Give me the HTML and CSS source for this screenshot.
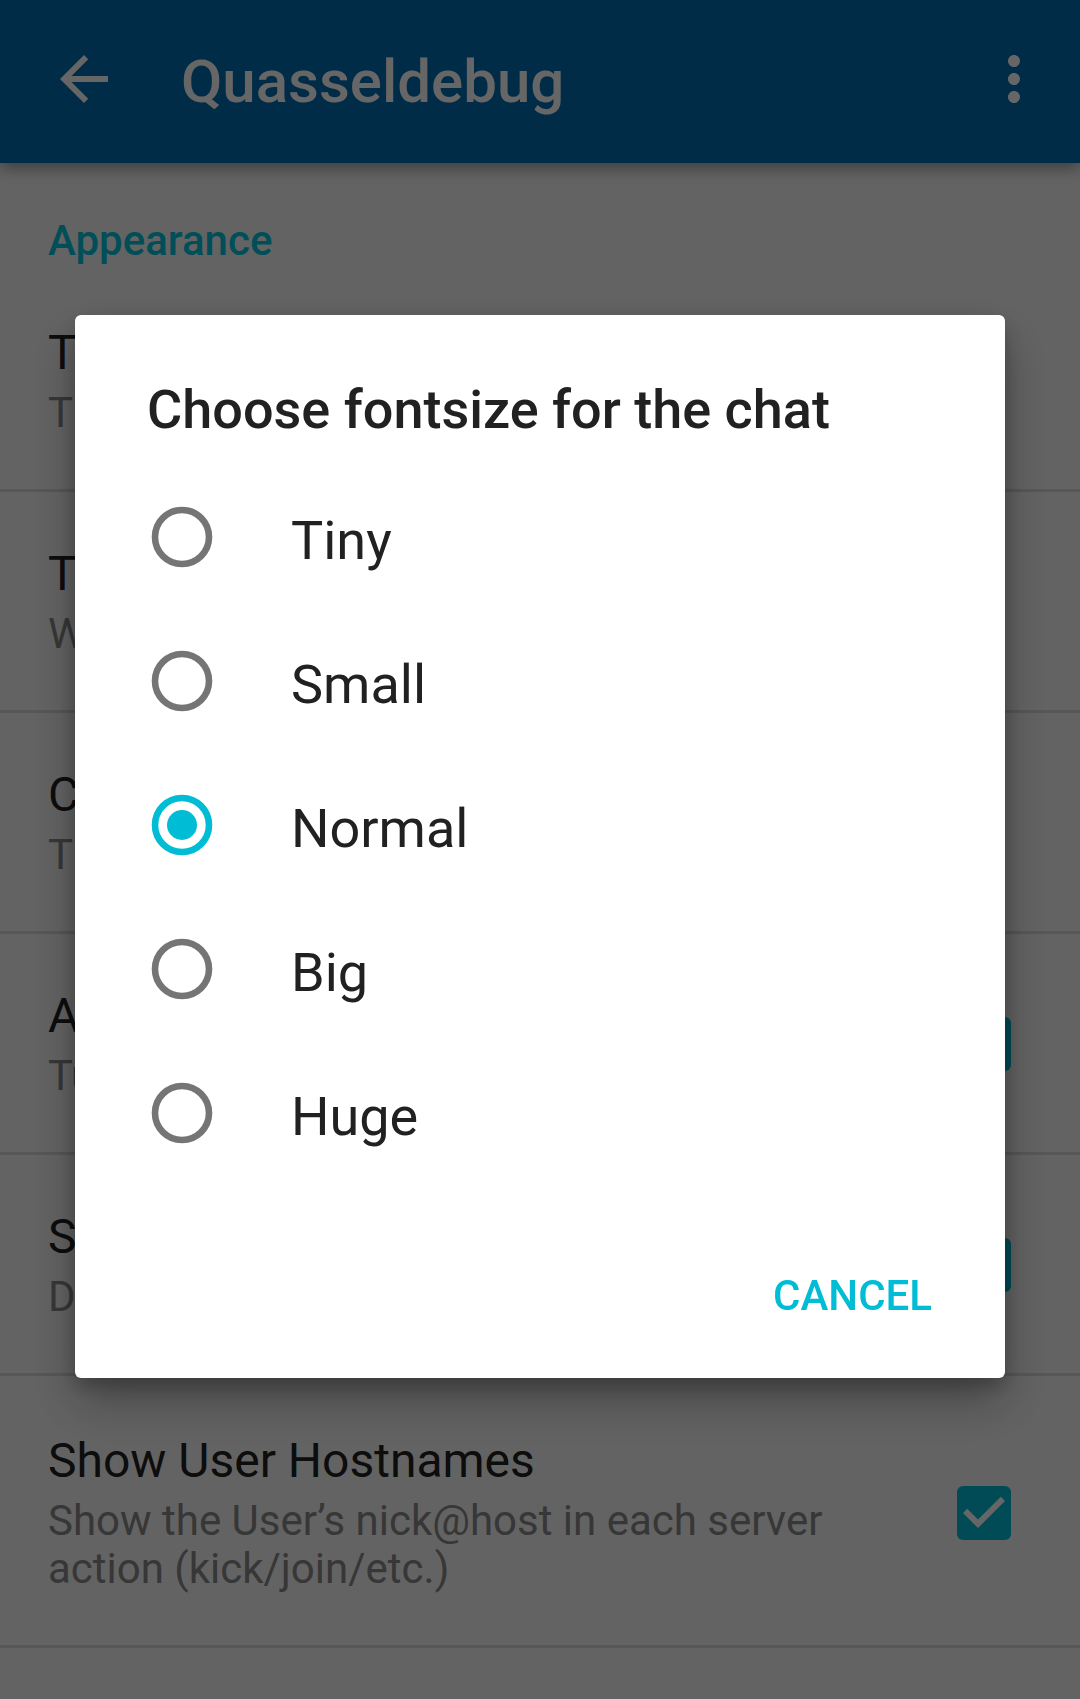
FILE: index.html
```html
<!DOCTYPE html>
<html lang="en">
<head>
<meta charset="utf-8">
<title>Quasseldebug – Settings</title>
<link rel="stylesheet" href="styles.css">
</head>
<body>
<div class="app">
  <header class="toolbar">
    <svg class="tb-icon back" viewBox="0 0 24 24" aria-label="Back"><path d="M20 11H7.83l5.59-5.59L12 4l-8 8 8 8 1.41-1.41L7.83 13H20v-2z"/></svg>
    <h1 class="tb-title">Quasseldebug</h1>
    <svg class="tb-icon more" viewBox="0 0 24 24" aria-label="More options"><path d="M12 8c1.1 0 2-.9 2-2s-.9-2-2-2-2 .9-2 2 .9 2 2 2zm0 2c-1.1 0-2 .9-2 2s.9 2 2 2 2-.9 2-2-.9-2-2-2zm0 6c-1.1 0-2 .9-2 2s.9 2 2 2 2-.9 2-2-.9-2-2-2z"/></svg>
  </header>

  <main class="prefs">
    <div class="category">Appearance</div>

    <div class="pref">
      <div class="pref-text">
        <div class="pref-title">Theme</div>
        <div class="pref-summary">The look of the app</div>
      </div>
    </div>

    <div class="pref">
      <div class="pref-text">
        <div class="pref-title">Timestamp format</div>
        <div class="pref-summary">Which format to use</div>
      </div>
    </div>

    <div class="pref">
      <div class="pref-text">
        <div class="pref-title">Chat fontsize</div>
        <div class="pref-summary">The size of the chat text</div>
      </div>
    </div>

    <div class="pref">
      <div class="pref-text">
        <div class="pref-title">Autocomplete</div>
        <div class="pref-summary">Turn on nick completion</div>
      </div>
      <svg class="checkbox" viewBox="0 0 24 24"><rect x="3" y="3" width="18" height="18" rx="2" class="cb-box"/><path class="cb-check" d="M10 17l-5-5 1.41-1.41L10 14.17l7.59-7.59L19 8l-9 9z"/></svg>
    </div>

    <div class="pref">
      <div class="pref-text">
        <div class="pref-title">Show timestamps</div>
        <div class="pref-summary">Display message times</div>
      </div>
      <svg class="checkbox" viewBox="0 0 24 24"><rect x="3" y="3" width="18" height="18" rx="2" class="cb-box"/><path class="cb-check" d="M10 17l-5-5 1.41-1.41L10 14.17l7.59-7.59L19 8l-9 9z"/></svg>
    </div>

    <div class="pref pref-multiline">
      <div class="pref-text">
        <div class="pref-title">Show User Hostnames</div>
        <div class="pref-summary">Show the User’s nick@host in each server action (kick/join/etc.)</div>
      </div>
      <svg class="checkbox" viewBox="0 0 24 24"><rect x="3" y="3" width="18" height="18" rx="2" class="cb-box"/><path class="cb-check" d="M10 17l-5-5 1.41-1.41L10 14.17l7.59-7.59L19 8l-9 9z"/></svg>
    </div>
  </main>
</div>

<div class="scrim"></div>

<div class="dialog" role="dialog">
  <h2 class="dialog-title">Choose fontsize for the chat</h2>
  <ul class="options">
    <li class="option">
      <svg class="radio" viewBox="0 0 24 24"><circle cx="12" cy="12" r="9" class="ring"/></svg>
      <span class="option-label">Tiny</span>
    </li>
    <li class="option">
      <svg class="radio" viewBox="0 0 24 24"><circle cx="12" cy="12" r="9" class="ring"/></svg>
      <span class="option-label">Small</span>
    </li>
    <li class="option selected">
      <svg class="radio" viewBox="0 0 24 24"><circle cx="12" cy="12" r="9" class="ring"/><circle cx="12" cy="12" r="5" class="dot"/></svg>
      <span class="option-label">Normal</span>
    </li>
    <li class="option">
      <svg class="radio" viewBox="0 0 24 24"><circle cx="12" cy="12" r="9" class="ring"/></svg>
      <span class="option-label">Big</span>
    </li>
    <li class="option">
      <svg class="radio" viewBox="0 0 24 24"><circle cx="12" cy="12" r="9" class="ring"/></svg>
      <span class="option-label">Huge</span>
    </li>
  </ul>
  <div class="actions">
    <button class="btn-text">CANCEL</button>
  </div>
</div>
</body>
</html>
```

FILE: styles.css
```css
* { box-sizing: border-box; }

html, body {
  margin: 0;
  padding: 0;
}

body {
  width: 1080px;
  height: 1699px;
  overflow: hidden;
  background: #f8f8f8;
  font-family: Roboto, "Noto Sans", "Liberation Sans", sans-serif;
  color: #212121;
}

.app {
  width: 1080px;
  height: 1699px;
  background: #f8f8f8;
}

/* Toolbar */
.toolbar {
  position: relative;
  z-index: 1;
  height: 163px;
  background: #006eb4;
  display: flex;
  align-items: center;
  padding: 0 30px 0 48px;
  box-shadow: 0 6px 14px rgba(0, 0, 0, 0.35);
}

.tb-icon {
  width: 72px;
  height: 72px;
  fill: #ffffff;
  flex: none;
  margin-bottom: 6px;
}

.tb-title {
  margin: 0 0 0 61px;
  flex: 1;
  font-size: 60px;
  line-height: 70px;
  font-weight: 500;
  color: #ffffff;
}

/* Preference list */
.category {
  padding: 54px 0 6px 48px;
  font-size: 42px;
  line-height: 48px;
  font-weight: 500;
  color: #00c4dc;
}

.pref {
  display: flex;
  align-items: center;
  padding: 54px 60px 52px 48px;
  border-bottom: 3px solid #d9d9d9;
}

.pref-multiline {
  padding-top: 57px;
}

.pref-text {
  flex: 1;
  min-width: 0;
}

.pref-title {
  font-size: 48px;
  line-height: 56px;
  color: #212121;
}

.pref-summary {
  margin-top: 8px;
  font-size: 42px;
  line-height: 48px;
  color: #8a8a8a;
}

.checkbox {
  width: 72px;
  height: 72px;
  flex: none;
  margin-left: 32px;
}

.cb-box { fill: #00bcd4; }
.cb-check { fill: #ffffff; }

/* Scrim + dialog */
.scrim {
  position: fixed;
  inset: 0;
  z-index: 5;
  background: rgba(0, 0, 0, 0.6);
}

.dialog {
  position: fixed;
  z-index: 10;
  left: 75px;
  top: 315px;
  width: 930px;
  height: 1063px;
  background: #ffffff;
  border-radius: 6px;
  box-shadow: 0 24px 48px rgba(0, 0, 0, 0.3), 0 8px 20px rgba(0, 0, 0, 0.22);
}

.dialog-title {
  margin: 0;
  padding: 63px 72px 0;
  font-size: 54px;
  line-height: 63px;
  font-weight: 500;
  color: #212121;
}

.options {
  list-style: none;
  margin: 24px 0 0;
  padding: 0;
}

.option {
  height: 144px;
  display: flex;
  align-items: center;
  padding-left: 71px;
}

.radio {
  width: 72px;
  height: 72px;
  flex: none;
}

.ring {
  fill: none;
  stroke: #757575;
  stroke-width: 2.2;
}

.dot { fill: #00bcd4; }

.option.selected .ring { stroke: #00bcd4; }

.option-label {
  margin-left: 73px;
  padding-top: 6px;
  font-size: 54px;
  line-height: 63px;
  color: #212121;
}

.actions {
  display: flex;
  justify-content: flex-end;
  padding: 86px 73px 0;
}

.btn-text {
  margin: 0;
  padding: 0;
  border: 0;
  background: none;
  font-family: Roboto, "Noto Sans", "Liberation Sans", sans-serif;
  font-size: 42px;
  line-height: 49px;
  font-weight: 500;
  color: #00bcd4;
}
```
